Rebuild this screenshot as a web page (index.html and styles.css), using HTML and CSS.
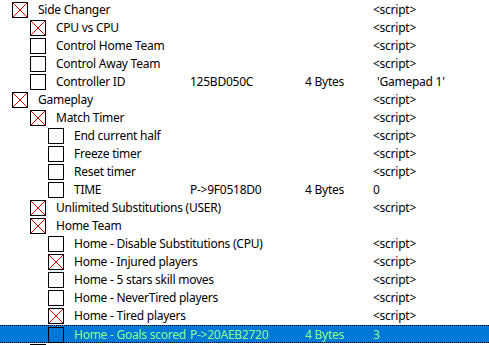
FILE: index.html
```html
<!DOCTYPE html>
<html>
<head>
<meta charset="utf-8">
<link rel="stylesheet" href="styles.css">
</head>
<body>
<div class="list">
  <div class="row"><div class="desc l0"><span class="cb x"></span><span class="t">Side Changer</span></div><div></div><div></div><div>&lt;script&gt;</div></div>
  <div class="row"><div class="desc l1"><span class="cb x"></span><span class="t">CPU vs CPU</span></div><div></div><div></div><div>&lt;script&gt;</div></div>
  <div class="row"><div class="desc l1"><span class="cb"></span><span class="t">Control Home Team</span></div><div></div><div></div><div>&lt;script&gt;</div></div>
  <div class="row"><div class="desc l1"><span class="cb"></span><span class="t">Control Away Team</span></div><div></div><div></div><div>&lt;script&gt;</div></div>
  <div class="row"><div class="desc l1"><span class="cb"></span><span class="t">Controller ID</span></div><div>125BD050C</div><div>4 Bytes</div><div class="v">'Gamepad 1'</div></div>
  <div class="row"><div class="desc l0"><span class="cb x"></span><span class="t">Gameplay</span></div><div></div><div></div><div>&lt;script&gt;</div></div>
  <div class="row"><div class="desc l1"><span class="cb x"></span><span class="t">Match Timer</span></div><div></div><div></div><div>&lt;script&gt;</div></div>
  <div class="row"><div class="desc l2"><span class="cb"></span><span class="t">End current half</span></div><div></div><div></div><div>&lt;script&gt;</div></div>
  <div class="row"><div class="desc l2"><span class="cb"></span><span class="t">Freeze timer</span></div><div></div><div></div><div>&lt;script&gt;</div></div>
  <div class="row"><div class="desc l2"><span class="cb"></span><span class="t">Reset timer</span></div><div></div><div></div><div>&lt;script&gt;</div></div>
  <div class="row"><div class="desc l2"><span class="cb"></span><span class="t">TIME</span></div><div>P-&gt;9F0518D0</div><div>4 Bytes</div><div>0</div></div>
  <div class="row"><div class="desc l1"><span class="cb x"></span><span class="t">Unlimited Substitutions (USER)</span></div><div></div><div></div><div>&lt;script&gt;</div></div>
  <div class="row"><div class="desc l1"><span class="cb x"></span><span class="t">Home Team</span></div><div></div><div></div><div></div></div>
  <div class="row"><div class="desc l2"><span class="cb"></span><span class="t">Home - Disable Substitutions (CPU)</span></div><div></div><div></div><div>&lt;script&gt;</div></div>
  <div class="row"><div class="desc l2"><span class="cb x"></span><span class="t">Home - Injured players</span></div><div></div><div></div><div>&lt;script&gt;</div></div>
  <div class="row"><div class="desc l2"><span class="cb"></span><span class="t">Home - 5 stars skill moves</span></div><div></div><div></div><div>&lt;script&gt;</div></div>
  <div class="row"><div class="desc l2"><span class="cb"></span><span class="t">Home - NeverTired players</span></div><div></div><div></div><div>&lt;script&gt;</div></div>
  <div class="row"><div class="desc l2"><span class="cb x"></span><span class="t">Home - Tired players</span></div><div></div><div></div><div>&lt;script&gt;</div></div>
  <div class="row sel"><div class="desc l2"><span class="cb"></span><span class="t">Home - Goals scored</span></div><div>P-&gt;20AEB2720</div><div>4 Bytes</div><div>3</div></div>
  <div class="row last"><div class="desc l1"><span class="cb"></span></div><div></div><div></div><div></div></div>
</div>
</body>
</html>
```
FILE: styles.css
```css
html, body {
  margin: 0;
  padding: 0;
  background: #fff;
  overflow: hidden;
}
.list {
  padding-top: 1px;
  font-family: "Noto Sans", "Open Sans", sans-serif;
  font-size: 12px;
  letter-spacing: -0.25px;
  color: #000;
  width: 489px;
}
.row {
  display: grid;
  grid-template-columns: 190px 115px 68px 1fr;
  height: 18px;
  line-height: 18px;
  align-items: center;
  white-space: nowrap;
  box-sizing: border-box;
}
.desc {
  display: flex;
  align-items: center;
  min-width: 0;
  overflow: visible;
}
.t { flex: none; }
.l0 { padding-left: 12px; }
.l1 { padding-left: 30px; }
.l2 { padding-left: 48px; }
.cb {
  flex: none;
  width: 16px;
  height: 16px;
  box-sizing: border-box;
  border: 1px solid #000;
  margin-right: 10px;
}
.cb.x {
  background:
    linear-gradient(to top right, transparent calc(50% - 0.6px), #e00000 50%, transparent calc(50% + 0.6px)),
    linear-gradient(to bottom right, transparent calc(50% - 0.6px), #e00000 50%, transparent calc(50% + 0.6px));
  background-color: #fff;
}
.v { margin-left: 4px; }
.sel {
  background: #0078d7;
  color: #8cff8c;
  border-top: 1px dotted #000;
  border-bottom: 1px dotted #000;
}
.last { align-items: start; }
.last .desc { padding-top: 1px; }
```
